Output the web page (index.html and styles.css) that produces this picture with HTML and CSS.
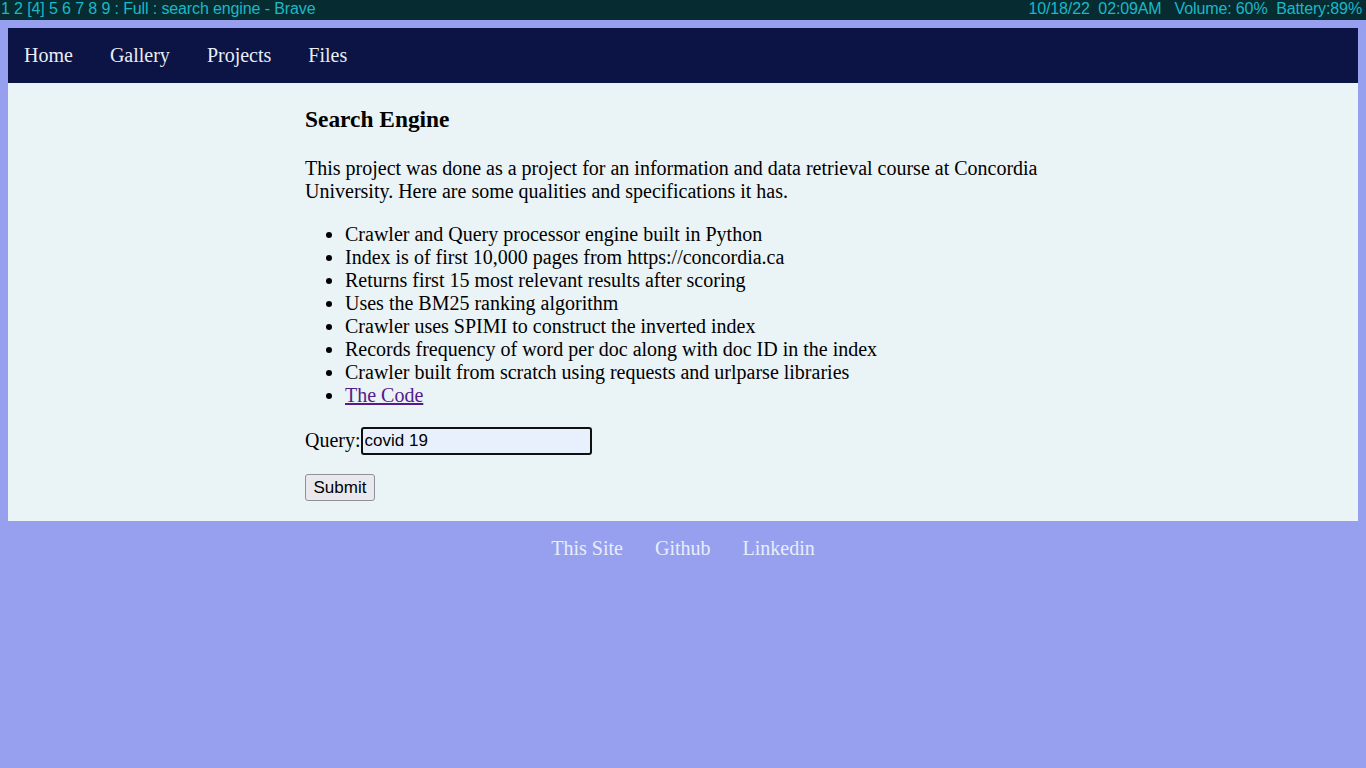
FILE: index.html
```html
<!DOCTYPE html>
<html lang="en">
<head>
<meta charset="utf-8">
<title>search engine</title>
<link rel="stylesheet" href="styles.css">
</head>
<body>
<div class="statusbar">
  <span class="tags">1 2 [4] 5 6 7 8 9 : Full : search engine - Brave</span>
  <span class="status">10/18/22  02:09AM   Volume: 60%  Battery:89%</span>
</div>
<div class="page">
  <div class="container">
    <nav class="nav">
      <a href="#">Home</a>
      <a href="#">Gallery</a>
      <a href="#">Projects</a>
      <a href="#">Files</a>
    </nav>
    <section class="content">
      <h3 class="title">Search Engine</h3>
      <p class="intro">This project was done as a project for an information and data retrieval course at Concordia University. Here are some qualities and specifications it has.</p>
      <ul class="features">
        <li>Crawler and Query processor engine built in Python</li>
        <li>Index is of first 10,000 pages from https://concordia.ca</li>
        <li>Returns first 15 most relevant results after scoring</li>
        <li>Uses the BM25 ranking algorithm</li>
        <li>Crawler uses SPIMI to construct the inverted index</li>
        <li>Records frequency of word per doc along with doc ID in the index</li>
        <li>Crawler built from scratch using requests and urlparse libraries</li>
        <li><a class="code-link" href="#">The Code</a></li>
      </ul>
      <form class="query-form">
        <div class="query-row">
          <label class="query-label" for="q">Query:</label><input id="q" class="query-input" type="text" value="covid 19">
        </div>
        <div class="submit-row">
          <button class="submit" type="button">Submit</button>
        </div>
      </form>
    </section>
  </div>
  <footer class="footer">
    <a href="#">This Site</a><a href="#">Github</a><a href="#">Linkedin</a>
  </footer>
</div>
</body>
</html>
```
FILE: styles.css
```css
html, body {
  margin: 0;
  padding: 0;
}
body {
  background: #96a0ef;
  font-family: "Liberation Serif", "Times New Roman", serif;
  font-size: 20px;
  min-height: 768px;
}
.statusbar {
  height: 20px;
  background: #062b30;
  color: #1ab8c9;
  font-family: "Liberation Sans", Arial, sans-serif;
  font-size: 16px;
  line-height: 17px;
  display: flex;
  justify-content: space-between;
  padding: 0 4px 0 1px;
  white-space: pre;
  letter-spacing: -0.12px;
}
.page {
  padding: 8px 8px 0;
}
.container {
  background: #eaf3f6;
}
.nav {
  background: #0c1445;
  height: 55px;
  display: flex;
  align-items: center;
  padding-left: 0;
}
.nav a {
  color: #e8eef5;
  text-decoration: none;
  padding: 0 16px;
  margin-right: 5px;
  line-height: 23px;
}
.content {
  width: 756px;
  margin: 0 auto;
  padding: 23px 0 20px;
}
.title {
  font-size: 23.4px;
  font-weight: bold;
  margin: 0 0 24px;
  line-height: 27px;
}
.intro {
  margin: 0 0 20px;
  line-height: 23px;
}
.features {
  margin: 0 0 20px;
  padding-left: 40px;
  line-height: 23px;
}
.code-link {
  color: #551a8b;
}
.query-form {
  display: flex;
  flex-direction: column;
  gap: 20px;
}
.query-row {
  display: flex;
  align-items: center;
  height: 27px;
}
.query-label {
  line-height: 23px;
}
.query-input {
  width: 231px;
  height: 28px;
  box-sizing: border-box;
  border: 2px solid #101010;
  border-radius: 3px;
  background: #e8f0fe;
  font-family: "Liberation Sans", Arial, sans-serif;
  font-size: 17px;
  padding: 1px 2px;
  color: #000;
  margin: 0;
  outline: none;
}
.submit-row {
  display: flex;
}
.submit {
  width: 70px;
  height: 27px;
  box-sizing: border-box;
  font-family: "Liberation Sans", Arial, sans-serif;
  font-size: 17px;
  background: #e9e9ed;
  border: 1px solid #8f8f9d;
  border-radius: 3px;
  color: #000;
  padding: 0;
}
.footer {
  display: flex;
  justify-content: center;
  gap: 32px;
  padding-top: 16px;
  line-height: 23px;
}
.footer a {
  color: #e6eefa;
  text-decoration: none;
}
```
